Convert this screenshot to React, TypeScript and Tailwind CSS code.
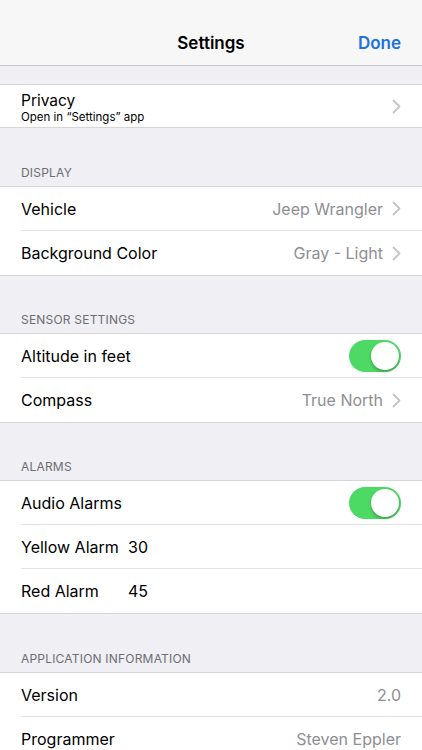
import React from "react";

function Chevron() {
  return (
    <svg width="9" height="15" viewBox="0 0 9 15" className="ml-[9px] shrink-0">
      <path d="M1.5 1.5 L7.5 7.5 L1.5 13.5" fill="none" stroke="#c4c4c9" strokeWidth="1.8" strokeLinecap="round" strokeLinejoin="round" />
    </svg>
  );
}

function Toggle() {
  return (
    <div className="relative w-[52px] h-[32px] rounded-full bg-[#4cd964]">
      <div className="absolute right-[2px] top-[2px] w-[28px] h-[28px] rounded-full bg-white shadow-[0_2px_3px_rgba(0,0,0,0.25)]" />
    </div>
  );
}

function SectionHeader({ label, tall }: { label?: string; tall?: boolean }) {
  return (
    <div className={(tall ? "h-[58px]" : "h-[57px]") + " flex items-end px-[21px] pb-[4px] bg-[#efeff4]"}>
      {label && <span className="text-[12px] text-[#6d6d72] tracking-[0.2px]">{label}</span>}
    </div>
  );
}

function Row({
  title,
  value,
  chevron,
  toggle,
  inline,
  last,
}: {
  title: string;
  value?: string;
  chevron?: boolean;
  toggle?: boolean;
  inline?: string;
  last?: boolean;
}) {
  return (
    <div className="bg-white pl-[21px]">
      <div
        className={
          "h-[44px] flex items-center pr-[21px] " +
          (last ? "" : "border-b border-[#e3e3e6]")
        }
      >
        <span className={"text-[16px] text-black " + (inline ? "w-[107px]" : "")}>{title}</span>
        {inline && <span className="text-[16px] text-black">{inline}</span>}
        <div className="flex-1" />
        {value && <span className="text-[16px] text-[#8e8e93]">{value}</span>}
        {chevron && <Chevron />}
        {toggle && <Toggle />}
      </div>
    </div>
  );
}

function Group({ children }: { children: React.ReactNode }) {
  return <div className="border-y border-[#d5d5da]">{children}</div>;
}

export default function App() {
  return (
    <div
      className="w-[422px] h-[750px] overflow-hidden bg-[#efeff4]"
      style={{ fontFamily: "Inter, 'Liberation Sans', sans-serif" }}
    >
      <div className="h-[66px] bg-[#f7f7f8] border-b border-[#c8c7cc] flex items-end pb-[9px] relative">
        <div className="w-full text-center text-[17px] font-semibold text-black">Settings</div>
        <div className="absolute right-[21px] bottom-[9px] text-[17px] font-semibold text-[#1b72e0]">Done</div>
      </div>

      <div className="h-[18px]" />
      <Group>
        <div className="bg-white pl-[21px] pr-[21px] h-[42px] flex items-center">
          <div className="flex-1 flex flex-col leading-none pt-[4px]">
            <span className="text-[15.5px] text-black">Privacy</span>
            <span className="text-[11.5px] text-black mt-[3px]">Open in “Settings” app</span>
          </div>
          <Chevron />
        </div>
      </Group>

      <SectionHeader label="DISPLAY" tall />
      <Group>
        <Row title="Vehicle" value="Jeep Wrangler" chevron />
        <Row title="Background Color" value="Gray - Light" chevron last />
      </Group>

      <SectionHeader label="SENSOR SETTINGS" />
      <Group>
        <Row title="Altitude in feet" toggle />
        <Row title="Compass" value="True North" chevron last />
      </Group>

      <SectionHeader label="ALARMS" />
      <Group>
        <Row title="Audio Alarms" toggle />
        <Row title="Yellow Alarm" inline="30" />
        <Row title="Red Alarm" inline="45" last />
      </Group>

      <SectionHeader label="APPLICATION INFORMATION" tall />
      <Group>
        <Row title="Version" value="2.0" />
        <Row title="Programmer" value="Steven Eppler" last />
      </Group>
    </div>
  );
}
